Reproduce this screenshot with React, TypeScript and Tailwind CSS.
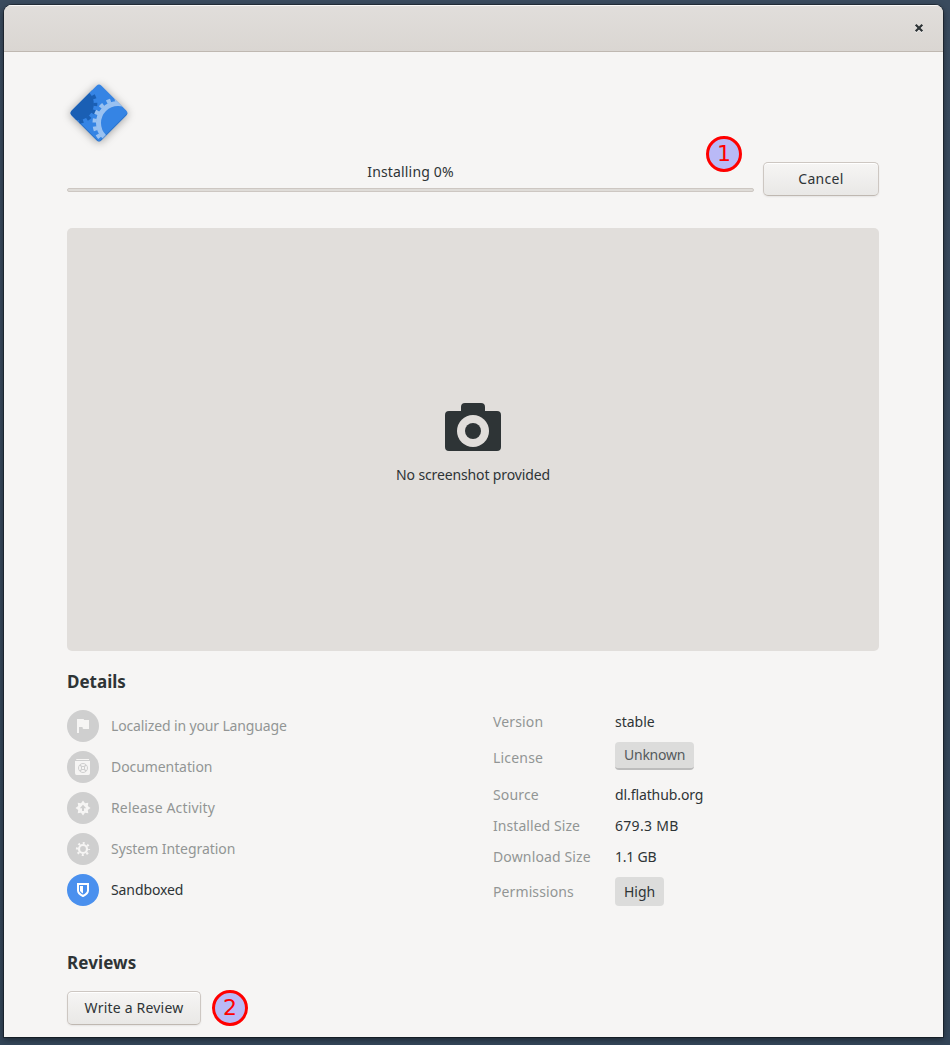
import type { ReactNode } from "react";

function Badge({ children, className }: { children: ReactNode; className: string }) {
  return (
    <div
      className={`absolute flex size-9 items-center justify-center rounded-full border-3 border-[#ff0000] bg-[#b9b9f6] font-['DejaVu_Sans',sans-serif] text-[22px] leading-none text-[#ff0000] ${className}`}
    >
      {children}
    </div>
  );
}

function Button({ children, className }: { children: ReactNode; className: string }) {
  return (
    <button
      className={`flex h-[34px] items-center justify-center rounded-[5px] border border-[#cdc7c2] border-b-[#bfb8b1] bg-linear-to-b from-[#f6f5f4] to-[#e9e8e6] shadow-[inset_0_1px_#fff,0_1px_2px_rgba(0,0,0,0.07)] ${className}`}
    >
      {children}
    </button>
  );
}

function AppIcon() {
  return (
    <svg className="size-16 overflow-visible drop-shadow-[0_1px_4px_rgba(0,0,0,0.35)]" viewBox="0 0 64 64">
      <defs>
        <clipPath id="diamond">
          <rect x="11" y="11" width="42" height="42" rx="3.5" transform="rotate(45 32 32)" />
        </clipPath>
      </defs>
      <g clipPath="url(#diamond)">
        <rect width="64" height="64" fill="#3584e4" />
        <circle cx="10.500" cy="23" r="16.300" fill="#1a5fb4" />
        <circle cx="10.500" cy="23" r="17.800" fill="none" stroke="#1a5fb4" strokeWidth="4" strokeDasharray="3.990 3.999" strokeDashoffset="2" />
        <circle cx="51" cy="42" r="19.500" fill="none" stroke="#99c1f1" strokeWidth="5" />
        <circle cx="51" cy="42" r="23.500" fill="none" stroke="#99c1f1" strokeWidth="4" strokeDasharray="4.100 4.103" />
        <path d="M2 32L32 62L62 32" fill="none" stroke="#1a5fb4" strokeWidth="2" opacity=".5" />
      </g>
    </svg>
  );
}

function FlagIcon() {
  return <path d="M2 1H8.500Q9 1 9 2H14V11H8.500Q7.500 11 7.500 9H4V15H2Z" fill="currentColor" />;
}

function DocumentationIcon() {
  return (
    <>
      <path d="M2 0H14V1H1V.5ZM0 2H15V14Q15 16 13.500 16H1.500Q0 16 0 14Z" fill="currentColor" />
      <g fill="none" stroke="#cfcfcf">
        <circle cx="8" cy="9" r="4.500" />
        <circle cx="8" cy="9" r="1.700" />
        <path d="M4.900 5.900L6.800 7.800M9.200 10.200L11.100 12.100M11.100 5.900L9.200 7.800M6.800 10.200L4.900 12.100" strokeWidth="1.300" />
      </g>
    </>
  );
}

function ReleaseIcon() {
  return (
    <>
      <path
        d="M8 .5L10 3.200L13.300 2.700L12.800 6L15.500 8L12.800 10L13.300 13.300L10 12.800L8 15.500L6 12.800L2.700 13.300L3.200 10L.5 8L3.200 6L2.700 2.700L6 3.200Z"
        fill="currentColor"
      />
      <path d="M8 4.800L11.200 8.300H9V11H7V8.300H4.800Z" fill="#cfcfcf" />
    </>
  );
}

function GearIcon() {
  return (
    <g fill="none" stroke="currentColor">
      <circle cx="8" cy="8" r="4" strokeWidth="2.200" />
      <circle cx="8" cy="8" r="6" strokeWidth="2.200" strokeDasharray="2 2.712" strokeDashoffset="1" />
    </g>
  );
}

function ShieldIcon() {
  return (
    <>
      <path d="M3 2H13V8.500Q13 11.500 8 14Q3 11.500 3 8.500Z" fill="none" stroke="currentColor" strokeWidth="2" />
      <path d="M5 4H8V11.600Q5 10 5 8.500Z" fill="currentColor" />
    </>
  );
}

const features = [
  { label: "Localized in your Language", icon: <FlagIcon />, active: false, tracking: "tracking-[-0.14px]" },
  { label: "Documentation", icon: <DocumentationIcon />, active: false, tracking: "tracking-[-0.08px]" },
  { label: "Release Activity", icon: <ReleaseIcon />, active: false, tracking: "tracking-[0.16px]" },
  { label: "System Integration", icon: <GearIcon />, active: false, tracking: "tracking-[-0.06px]" },
  { label: "Sandboxed", icon: <ShieldIcon />, active: true, tracking: "tracking-[-0.1px]" },
];

const details = [
  { label: "Version", value: "stable", row: "h-[31px]", labelTracking: "tracking-[0.15px]", valueTracking: "" },
  {
    label: "License",
    value: "Unknown",
    row: "h-[41px]",
    chip: "mb-[4px] h-7 border-b-2 border-[#bcbcbc] text-[#555a5b]",
    labelTracking: "tracking-[0.2px]",
    valueTracking: "tracking-[-0.25px]",
  },
  { label: "Source", value: "dl.flathub.org", row: "h-[33px]", labelTracking: "tracking-[0.15px]", valueTracking: "tracking-[-0.1px]" },
  { label: "Installed Size", value: "679.3 MB", row: "h-[29px]", labelTracking: "tracking-[0.06px]", valueTracking: "tracking-[0.3px]" },
  { label: "Download Size", value: "1.1 GB", row: "h-[33px]", labelTracking: "tracking-[0.14px]", valueTracking: "tracking-[-0.2px]" },
  { label: "Permissions", value: "High", row: "h-[37px]", chip: "h-[29px]", labelTracking: "tracking-[0.1px]", valueTracking: "" },
];

export default function App() {
  return (
    <div className="h-[1045px] w-[950px] bg-[#36475a] bg-linear-to-b from-[#3a4b5e] to-[#334558] pt-[5px] pl-1 font-['Noto_Sans',sans-serif] text-[14px] leading-5 text-[#2e3436]">
      <div className="relative flex h-[1032px] w-[939px] flex-col overflow-hidden rounded-t-lg bg-[#f6f5f4] shadow-[0_0_0_1px_rgba(0,0,0,0.35),0_2px_6px_rgba(0,0,0,0.5)]">
        <header className="flex h-[47px] shrink-0 items-center justify-end border-b border-[#bfb8b1] bg-linear-to-b from-[#e1dedb] to-[#dad6d2] pr-5 shadow-[inset_0_1px_#f9f8f8]">
          <button aria-label="Close">
            <svg className="size-2 overflow-visible" viewBox="0 0 8 8">
              <path d="M.7 1.700L7.300 8.300M7.300 1.700L.7 8.300" stroke="#fff" strokeWidth="2.200" opacity=".6" />
              <path d="M.7 .7L7.300 7.300M7.300 .7L.7 7.300" stroke="#2e3436" strokeWidth="2.200" />
            </svg>
          </button>
        </header>

        <main className="flex flex-col pr-16 pl-[63px]">
          <div className="mt-[29px]">
            <AppIcon />
          </div>
          <div className="mt-4 flex h-[35px] items-center gap-[9px]">
            <div className="flex w-[687px] flex-col items-center gap-[6px] pb-1">
              <span className="tracking-[0.16px]">Installing 0%</span>
              <div className="h-1 w-full rounded-xs border border-[#cdc7c2] bg-[#dfdcd8]" />
            </div>
            <Button className="w-[116px] tracking-[0.3px]">Cancel</Button>
          </div>

          <section className="mt-[32px] flex h-[423px] flex-col items-center rounded-[5px] bg-[#e1dedb] pt-[175px]">
            <svg className="h-12 w-14" viewBox="0 0 56 48" fill="#2e3436">
              <path d="M4 8H16V4Q16 0 20 0H36Q40 0 40 4V8H52Q56 8 56 12V44Q56 48 52 48H4Q0 48 0 44V12Q0 8 4 8Z" />
              <circle cx="28" cy="28" r="16" fill="#e1dedb" />
              <circle cx="28" cy="28" r="8" />
            </svg>
            <span className="mt-[14px] tracking-[-0.13px]">No screenshot provided</span>
          </section>

          <h2 className="mt-[19px] text-[17px] leading-6 font-bold">Details</h2>
          <div className="mt-4 flex">
            <ul className="flex w-[426px] flex-col gap-[9px]">
              {features.map((f) => (
                <li key={f.label} className={`flex items-center gap-3 ${f.active ? "" : "text-[#929595]"}`}>
                  <span
                    className={`flex size-8 items-center justify-center rounded-full ${
                      f.active ? "bg-[#4a90ee] text-white" : "bg-[#cfcfcf] text-[#f6f5f4]"
                    }`}
                  >
                    <svg className="size-4" viewBox="0 0 16 16">
                      {f.icon}
                    </svg>
                  </span>
                  <span className={f.tracking}>{f.label}</span>
                </li>
              ))}
            </ul>
            <dl className="-mt-[4px]">
              {details.map((d) => (
                <div key={d.label} className={`flex items-center ${d.row}`}>
                  <dt className={`w-[122px] text-[#929595] ${d.labelTracking}`}>{d.label}</dt>
                  <dd className={`${d.valueTracking} ${d.chip ? `flex items-center rounded-sm bg-[#dcdcdb] px-[9px] ${d.chip}` : ""}`}>
                    {d.value}
                  </dd>
                </div>
              ))}
            </dl>
          </div>

          <h2 className="mt-[41px] text-[17px] leading-6 font-bold tracking-[0.1px]">Reviews</h2>
          <Button className="mt-4 w-[134px] tracking-[0.2px]">Write a Review</Button>
        </main>

        <Badge className="top-[131px] left-[702px]">1</Badge>
        <Badge className="top-[985px] left-[208px]">2</Badge>
      </div>
    </div>
  );
}
